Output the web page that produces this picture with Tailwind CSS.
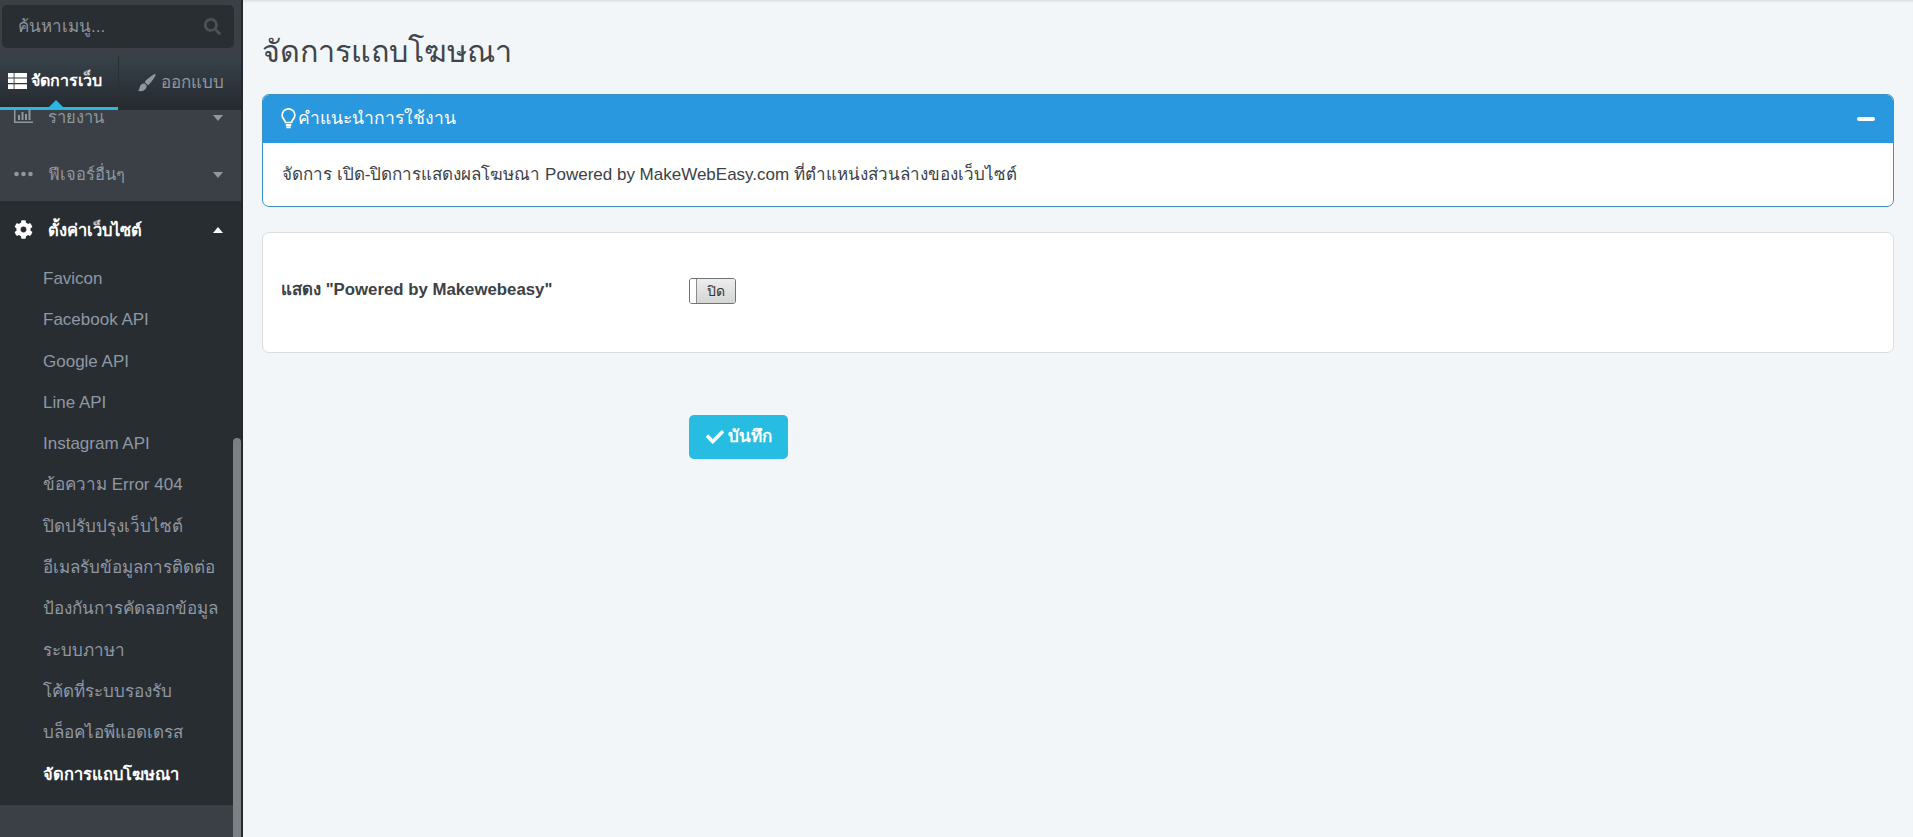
<!DOCTYPE html>
<html lang="th">
<head>
<meta charset="utf-8">
<title>จัดการแถบโฆษณา</title>
<script src="https://cdn.jsdelivr.net/npm/@tailwindcss/browser@4"></script>
</head>
<body class="h-[837px] overflow-hidden bg-[#f3f6f9] font-['Liberation_Sans','Noto_Sans',sans-serif] text-[#3a3f44]">
<div class="flex h-[837px]">

  <!-- sidebar -->
  <aside class="relative flex h-full w-[241px] shrink-0 flex-col overflow-hidden bg-[#3a4046]">
    <div class="pl-[2px] pr-[7px] pt-[5px]">
      <div class="flex h-[43px] items-center justify-between rounded-[5px] bg-[#292e33] pl-4 pr-[13px]">
        <span class="text-[17px] text-[#8b939b]">ค้นหาเมนู...</span>
        <svg class="h-[17px] w-[17px] fill-[#4c5258]" viewBox="0 0 512 512"><path d="M505 442.7L405.3 343c-4.5-4.5-10.6-7-17-7H372c27.6-35.3 44-79.7 44-128C416 93.1 322.9 0 208 0S0 93.1 0 208s93.1 208 208 208c48.3 0 92.7-16.4 128-44v16.3c0 6.4 2.5 12.5 7 17l99.7 99.7c9.4 9.4 24.6 9.4 33.9 0l28.3-28.3c9.4-9.4 9.4-24.6.1-34zM208 336c-70.7 0-128-57.2-128-128 0-70.7 57.2-128 128-128 70.7 0 128 57.2 128 128 0 70.7-57.2 128-128 128z"/></svg>
      </div>
    </div>

    <!-- tabs -->
    <div class="relative z-10 mt-2 flex h-[54px] shrink-0 bg-gradient-to-b from-[#39424a] to-[#24292e]">
      <div class="relative flex w-[118px] items-center border-b-[3px] border-[#29b9e0] pb-[1px] pl-2">
        <svg class="mr-1 h-[16px] w-[19px] fill-white" viewBox="0 0 19 16"><path d="M0 0h19v4.4H0zM0 5.6h19V10H0zM0 11.2h19V16H0z"/><path class="fill-[#39424a]" d="M5.6 0h.9v16h-.9z"/></svg>
        <span class="text-[16px] font-bold text-white">จัดการเว็บ</span>
        <span class="absolute bottom-0 left-[49px] h-0 w-0 border-x-[7px] border-b-[7px] border-x-transparent border-b-[#29b9e0]"></span>
      </div>
      <div class="flex flex-1 items-center border-l border-[#2a2f34] pl-[19px]">
        <svg class="mr-[5px] h-[18px] w-[18px] fill-[#8f979f]" viewBox="0 0 18 18"><path d="M17.2.3c.5.4.5 1 .1 1.7-1 1.9-4.2 6.4-5.6 7.7-.7.7-1.4 1.2-2.2 1.4L6.8 8.3c.3-.9.8-1.6 1.5-2.3C9.700 4.600 14 1.400 15.700.4c.6-.4 1.100-.5 1.500-.1zM6.300 9.200l2.400 2.500c-.1 2.700-2 5-5 5.500-1.300.2-2.700.1-3.700-.6 1.200-.7 1.300-1.700 1.600-3.100.4-2.300 2-3.900 4.700-4.300z"/></svg>
        <span class="text-[17px] text-[#8f979f]">ออกแบบ</span>
      </div>
    </div>

    <!-- menu, scrolled so the first row slides under the tabs -->
    <nav class="-mt-[8px] flex-1">
      <div class="flex h-[57px] items-start pt-[4px] pl-[14px] pr-[18px] text-[#8f979f]">
        <svg class="mr-[15px] mt-[1px] h-[16px] w-[19px] fill-[#8f979f]" viewBox="0 0 19 16"><path d="M0 0h1.500v14.500H19V16H0zM4 8h2v5H4zM7.500 5h2v8h-2zM11 7h2v6h-2zM14.500 2h2v11h-2z"/></svg>
        <span class="flex-1 text-[16.5px] leading-[22px]">รายงาน</span>
        <span class="mt-[9px] h-0 w-0 border-x-[5.500px] border-t-[6px] border-x-transparent border-t-[#8f979f]"></span>
      </div>
      <div class="flex h-[42px] items-start pt-[4px] pl-[14px] pr-[18px] text-[#8f979f]">
        <svg class="mr-[15px] mt-[3px] h-[16px] w-[19px] fill-[#8f979f]" viewBox="0 0 19 16"><circle cx="2.500" cy="8" r="2.300"/><circle cx="9.500" cy="8" r="2.300"/><circle cx="16.500" cy="8" r="2.300"/></svg>
        <span class="flex-1 text-[16.5px] leading-[22px]">ฟีเจอร์อื่นๆ</span>
        <span class="mt-[9px] h-0 w-0 border-x-[5.500px] border-t-[6px] border-x-transparent border-t-[#8f979f]"></span>
      </div>

      <div class="bg-[#282d32] pb-[10px]">
        <div class="flex h-[57px] items-center pl-[14px] pr-[18px]">
          <svg class="mr-[15px] h-[19px] w-[19px] fill-white" viewBox="0 0 512 512"><path d="M487.400 315.700l-42.600-24.600c4.300-23.200 4.300-47 0-70.200l42.600-24.600c4.900-2.800 7.100-8.600 5.500-14-11.100-35.600-30-67.800-54.700-94.600-3.800-4.100-10-5.100-14.800-2.300L380.800 110c-17.900-15.400-38.500-27.300-60.800-35.100V25.800c0-5.600-3.900-10.500-9.400-11.700-36.700-8.200-74.300-7.800-109.200 0-5.500 1.200-9.400 6.100-9.400 11.700V75c-22.200 7.900-42.800 19.800-60.800 35.100L88.700 85.500c-4.900-2.800-11-1.900-14.800 2.300-24.700 26.700-43.600 58.900-54.700 94.600-1.700 5.400.6 11.200 5.500 14L67.300 221c-4.300 23.200-4.300 47 0 70.200l-42.600 24.600c-4.900 2.800-7.100 8.600-5.500 14 11.100 35.600 30 67.800 54.700 94.600 3.800 4.100 10 5.100 14.800 2.300l42.600-24.600c17.900 15.400 38.500 27.300 60.800 35.100v49.200c0 5.600 3.900 10.500 9.400 11.700 36.700 8.200 74.300 7.800 109.200 0 5.500-1.200 9.400-6.100 9.400-11.700v-49.200c22.200-7.900 42.800-19.800 60.800-35.100l42.600 24.600c4.900 2.800 11 1.900 14.800-2.300 24.700-26.700 43.600-58.900 54.700-94.600 1.500-5.500-.7-11.300-5.600-14.100zM256 336c-44.100 0-80-35.900-80-80s35.900-80 80-80 80 35.900 80 80-35.900 80-80 80z"/></svg>
          <span class="flex-1 text-[16.5px] font-bold leading-[22px] text-white">ตั้งค่าเว็บไซต์</span>
          <span class="h-0 w-0 border-x-[5.500px] border-b-[6px] border-x-transparent border-b-white"></span>
        </div>
        <ul class="pl-[43px] text-[17px] leading-[41.300px] text-[#8f98a3]">
          <li>Favicon</li>
          <li>Facebook API</li>
          <li>Google API</li>
          <li>Line API</li>
          <li>Instagram API</li>
          <li>ข้อความ Error 404</li>
          <li>ปิดปรับปรุงเว็บไซต์</li>
          <li>อีเมลรับข้อมูลการติดต่อ</li>
          <li>ป้องกันการคัดลอกข้อมูล</li>
          <li>ระบบภาษา</li>
          <li>โค้ดที่ระบบรองรับ</li>
          <li>บล็อคไอพีแอดเดรส</li>
          <li class="text-[16.5px] font-bold text-white">จัดการแถบโฆษณา</li>
        </ul>
      </div>
    </nav>

    <!-- scrollbar thumb -->
    <div class="absolute bottom-0 left-[233px] top-[438px] z-20 w-[8px] rounded-t-[4px] bg-[#7b8084]"></div>
  </aside>

  <!-- main -->
  <main class="h-full flex-1 border-l-[2px] border-[#24292e] pl-[19px] pr-[19px] pt-[30px] shadow-[inset_0_3px_3px_-2px_rgba(0,0,0,0.12)]">
    <h1 class="h-[64px] text-[30.5px] font-normal leading-[42px] text-[#3f454b]">จัดการแถบโฆษณา</h1>

    <section class="overflow-hidden rounded-[7px] border border-[#3b93c4] bg-white">
      <div class="-mx-px -mt-px flex h-[49px] items-center justify-between bg-[#2a98df] pl-[19px] pr-[19px]">
        <div class="flex items-center gap-[2px]">
          <svg class="h-[22px] w-[15px] fill-none stroke-white" viewBox="0 0 15 22" stroke-width="1.700"><path d="M4.500 14.500c0-2.300-3.400-3.800-3.400-7.300a6.400 6.400 0 0 1 12.800 0c0 3.500-3.400 5-3.400 7.300z"/><path d="M4.800 17h5.400M5.300 19.300h4.400" stroke-width="2"/></svg>
          <span class="text-[17.5px] text-white">คำแนะนำการใช้งาน</span>
        </div>
        <span class="h-[4px] w-[18px] rounded-[2px] bg-white"></span>
      </div>
      <p class="flex h-[63px] items-center pl-[19px] text-[17px] text-[#3c4146]">จัดการ เปิด-ปิดการแสดงผลโฆษณา Powered by MakeWebEasy.com ที่ตำแหน่งส่วนล่างของเว็บไซต์</p>
    </section>

    <section class="mt-[25px] flex h-[121px] items-center rounded-[7px] border border-[#d9dde1] bg-white pb-[2px] pl-[18px]">
      <label class="mb-[4px] w-[408px] text-[16.8px] font-bold text-[#3c4146]">แสดง "Powered by Makewebeasy"</label>
      <div class="mb-[1px] flex h-[26px] w-[47px] overflow-hidden rounded-[3px] border border-[#6f7377]">
        <span class="w-[7px] border-r border-[#8a8e92] bg-white"></span>
        <span class="flex flex-1 items-center justify-center bg-gradient-to-b from-[#ededed] to-[#d5d5d5] text-[14px] text-[#333]">ปิด</span>
      </div>
    </section>

    <div class="mt-[62px] pl-[427px]">
      <button class="flex h-[44px] w-[99px] items-center justify-center gap-[4px] rounded-[5px] bg-[#27bde2] text-[17px] font-bold text-white">
        <svg class="h-[18px] w-[18px] fill-white" viewBox="0 0 512 512"><path d="M173.898 439.404l-166.400-166.400c-9.997-9.997-9.997-26.206 0-36.204l36.203-36.204c9.997-9.998 26.207-9.998 36.204 0L192 312.690 432.095 72.596c9.997-9.997 26.207-9.997 36.204 0l36.203 36.204c9.997 9.997 9.997 26.206 0 36.204l-294.400 294.401c-9.998 9.997-26.207 9.997-36.204-.001z"/></svg>
        บันทึก
      </button>
    </div>
  </main>
</div>
</body>
</html>
